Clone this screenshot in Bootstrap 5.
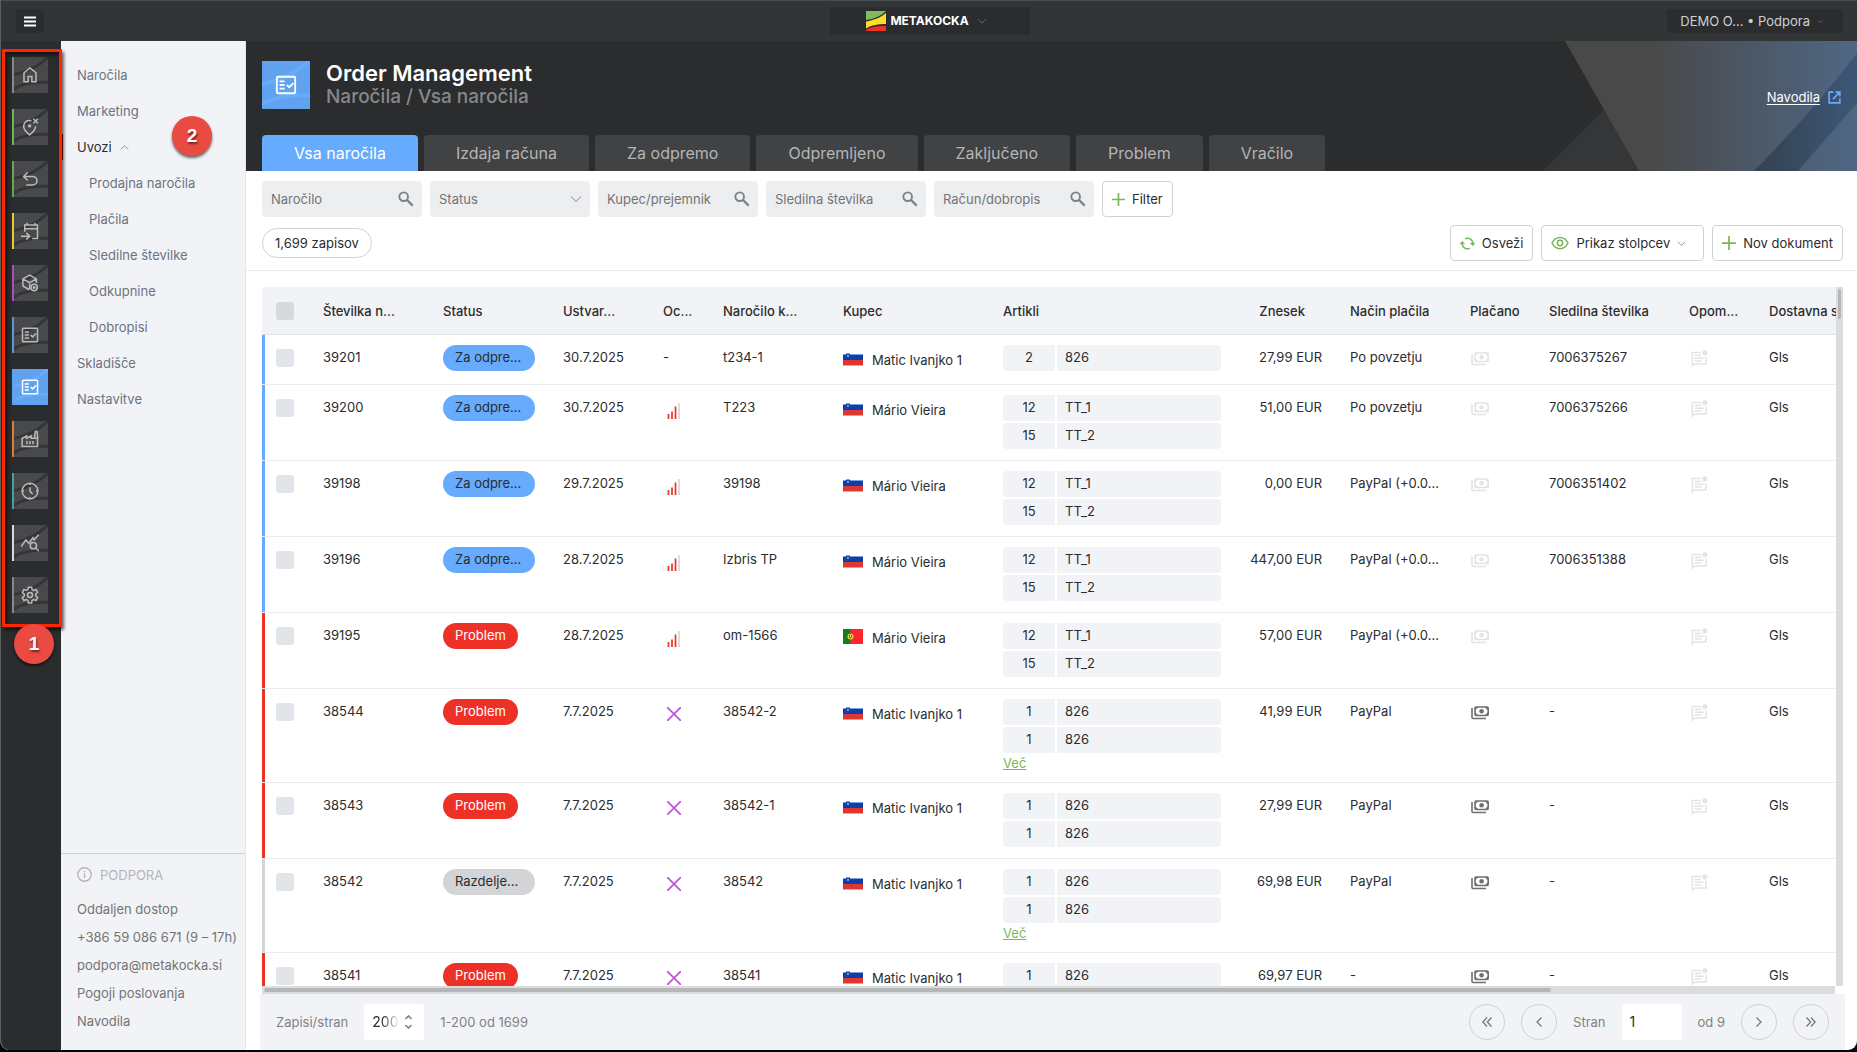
<!DOCTYPE html>
<html lang="sl">
<head>
<meta charset="utf-8">
<meta name="viewport" content="width=device-width, initial-scale=1">
<title>Metakocka – Order Management</title>
<link href="https://cdn.jsdelivr.net/npm/bootstrap@5.3.0/dist/css/bootstrap.min.css" rel="stylesheet">
<style>
:root{--dark:#2b2c2e;--soft:#f2f3f6;--blue:#66abfd;--red:#ee3126;--green:#77b95a;--ink:#2b2c2e;--slate:#6b7380}
body{font-family:Inter,"Liberation Sans",sans-serif;font-size:13px;line-height:20px;color:var(--ink);background:#02050f}
.app{height:calc(100vh - 2px);overflow:hidden;background:#fff;border-radius:0 0 9px 9px;border-left:1px solid #5c5f60}
svg{flex:none;display:block}
.ico{fill:none;stroke:currentColor;stroke-width:2}
.topbar{height:41px;background:#313536;border-top:1px solid #484d58;padding:0 14px 0 15px}
.top-side{flex:1 1 0}
.tb-btn{height:24px;background:var(--dark);color:#cfd0d1;border:0;border-radius:4px;font-size:13px;line-height:20px;padding:0 20px 0 13px}
.tb-menu{width:28px;padding:0;color:#fff}
.tb-brand{width:200px;height:28px;border-radius:0;color:#fff;font-weight:700;font-size:12px;padding:0 6px 0 0}
.rail{width:60px;background:var(--dark);padding:16px 0 0 11px;gap:16px}
.rail-tile{width:36px;height:36px;border-left:2px solid var(--c,#888);background:#48494b;color:#b9babb;padding-left:7px;position:relative;overflow:hidden}
.rail-tile .wave{position:absolute;left:0;top:0}
.rail-tile .ico{position:relative}
.wave{fill:none;stroke:#333436;stroke-width:3}
.rail-tile.now{background:#61a2ef;border-color:#61a2ef;color:#fff}
.now .wave,.headtile .wave{stroke:#66abfd}
.side{width:185px;background:var(--soft);border-right:1px solid #e6e7ea}
.side a{color:var(--slate);text-decoration:none;line-height:36px;display:block;padding-left:16px}
.side .sub a{padding-left:28px}
.side a.open{color:var(--ink)}
.side .support a{line-height:28px;color:#727476}
.support{border-top:1px solid #cfd0d3;padding-bottom:15px}
.support-title{color:#b3b4b7;padding:0 16px;height:41px;gap:8px}
.hero{height:130px;background:var(--dark);padding:20px 16px 0;position:relative}
.hero-art{position:absolute;right:0;top:0}
.headtile{width:48px;height:48px;background:#61a2ef;color:#fff;position:relative}
.headtile .wave{position:absolute;left:0;top:0}
.headtile .ico{position:relative}
.hero h1{font-size:22px;line-height:24px;font-weight:600;color:#fff;margin:0}
.hero h2{font-size:19px;line-height:24px;font-weight:500;color:#87888a;margin:0}
.help-link{color:#fff;text-underline-offset:2px;position:relative}
.help-link:hover{color:#fff}
.tabs{gap:6px;margin-top:26px;position:relative}
.tabs .nav-link{height:36px;padding:0 32px;font-size:16px;line-height:36px;background:#414244;color:#b4b5b6;border-radius:4px 4px 0 0}
.tabs .nav-link.active{background:var(--blue);color:#fff}
.tools{padding:10px 14px 9px 16px;border-bottom:1px solid #ebecee}
.fbox{width:160px;height:36px;background:#edeef0;border-radius:4px;padding:0 8px 0 9px;color:#7a828e}
.fbox input,.fbox select{border:0;background:transparent;outline:0;min-width:0;flex:1 1 auto;padding:0;appearance:none;color:#727476;font-size:13px}
.fbox input::placeholder{color:#727476;opacity:1}
.obtn{height:36px;border:1px solid #d0d1d3;border-radius:4px;background:#fff;color:var(--ink);padding:0 9px;font-size:13px;gap:7px}
.obtn svg:first-child{color:var(--green)}
.count{height:30px;line-height:28px;border:1px solid #d0d1d3;border-radius:15px;padding:0 12px}
.gridarea{margin:16px 14px 0 16px;min-height:0}
.gridview{overflow:hidden;min-width:0}
.vbar{width:8px;background:#dbdddc;padding:2px}
.vbar div{height:30px;background:#b4b6b8;border-radius:2px}
.hbar{height:8px;background:#dbdddc;margin:0 22px 0 16px;padding:2px}
.hbar div{height:4px;background:#b4b6b8;border-radius:2px}
.orders{width:1918px;table-layout:fixed;border-collapse:separate;border-spacing:0}
.orders th{height:48px;background:var(--soft);border-bottom:1px solid #dfe4e8;font-weight:500;padding:0 14px;white-space:nowrap}
.orders td{vertical-align:top;padding:10px 14px 9px;line-height:24px;border-bottom:1px solid #ebecee;white-space:nowrap;height:50px}
.orders td:first-child{box-shadow:inset 3px 0 0 var(--c)}
.t-blue{--c:#66abfd;--t:#2b2c2e}.t-red{--c:#ee3126;--t:#fff}.t-grey{--c:#d3d4d6;--t:#2b2c2e}
.orders input{appearance:none;width:18px;height:18px;border-radius:3px;background:#e1e4e8;display:block;margin:4px 0 0}
.orders th input{background:#d5dadd;margin:0}
.pill{display:inline-block;height:26px;line-height:24px;border-radius:13px;padding:0 12px;background:var(--c);color:var(--t);vertical-align:top}
.pill-cut{width:92px}
.num{text-align:right}
.orders th.num{padding-right:31px}
.buyer{line-height:30px;gap:9px}
.item-row{gap:2px;margin-bottom:2px}
.item-row span{background:var(--soft);height:26px}
.item-row span:first-child{width:52px;text-align:center;border-radius:4px 0 0 4px}
.item-row span:last-child{flex:1;padding-left:8px;border-radius:0 4px 4px 0}
.more{color:var(--green);display:block;width:fit-content;line-height:16px;height:18px}
.st{margin:5px 0 0 1px;color:#e4e4e5}
.st-on{color:#6f7072}
.foot{height:56px;background:var(--soft);margin:0 12px 0 14px;padding:0 16px;gap:16px;color:#808284}
.pgbox{width:60px;height:36px;background:#fff;border-radius:3px;color:#7a828e}
.pgbox input{border:0;outline:0;background:transparent;width:100%;padding:0 8px;font-size:14px;color:var(--ink)}
.pgbox.perpage input{width:36px;padding-right:0;-webkit-mask-image:linear-gradient(90deg,#000 50%,transparent 98%);mask-image:linear-gradient(90deg,#000 50%,transparent 98%)}
.circ{width:36px;height:36px;border:1px solid #cfd0d2;border-radius:50%;background:transparent;color:#6f7378;padding:0}
.note-frame{position:absolute;left:2px;top:49px;width:60px;height:578px;border:3px solid #ff2600;box-shadow:2px 3px 3px rgba(0,0,0,.6),inset 2px 3px 4px rgba(0,0,0,.6);pointer-events:none}
.note-dot{position:absolute;width:40px;height:40px;border-radius:50%;background:#e94a42;color:#fff;font:700 19px/40px "Liberation Sans",sans-serif;text-align:center;box-shadow:0 2px 3px rgba(0,0,0,.6);text-shadow:1px 2px 2px rgba(0,0,0,.5)}
.note-one{left:14px;top:624px}.note-two{left:172px;top:116px}
.mark-bar{position:absolute;left:61px;top:134px;width:2px;height:26px;background:#8c1a12}
</style>
</head>
<body>
<svg width="0" height="0" class="position-absolute" aria-hidden="true">
<symbol id="wave" viewBox="0 0 36 36"><path d="M-2 18C14 15 26 9 36-1M-2 34C10 26 22 25 38 26"/></symbol>
<symbol id="check" viewBox="0 0 24 24"><rect x="2" y="3" width="20" height="18" rx="1"/><path d="M5 8h5.500M5 12h5.500M5 16h5.500M13 12l2.500 2.500 4.500-4.500"/></symbol>
<symbol id="lens" viewBox="0 0 24 24"><circle cx="8.500" cy="8.500" r="6.500" stroke-width="2.800"/><path d="M13.500 13.500l8.500 8.500" stroke-width="3.400"/></symbol>
<symbol id="down" viewBox="0 0 24 24"><path d="M2 7l10 10 10-10"/></symbol>
<symbol id="bars" viewBox="0 0 14 16"><g stroke-width="1.700" stroke="#ee3126"><path d="M1.500 11v5M5 8.500V16M8.500 3.500V16"/></g><path d="M12 0v16" stroke="#d5d5d5" stroke-width="1.600"/></symbol>
<symbol id="cross" viewBox="0 0 14 14"><path d="M0 0l14 14M14 0L0 14" stroke="#c052d8" stroke-width="1.700"/></symbol>
<symbol id="cash" viewBox="0 0 18 14"><rect x="4" y="1" width="13.200" height="8.500" rx="1" stroke-width="1.600"/><circle cx="10.600" cy="5.200" r="2.300" fill="currentColor" stroke="none"/><path d="M4 1h3.500L4 4.500zM17 1h-3.500L17 4.500zM4 9.500h3.500L4 6zM17 9.500h-3.500L17 6z" fill="currentColor" stroke="none"/><path d="M1 2v9.500a1 1 0 0 0 1 1h13" stroke-width="1.600"/></symbol>
<symbol id="msg" viewBox="0 0 18 18"><path d="M11 2.500H2.300V16l2-2H16V7" stroke-width="1.500"/><path d="M4.500 5.500H11M4.500 8.200h9M4.500 11h7" stroke-width="1.400"/><circle cx="14.800" cy="2.800" r="2.600" fill="currentColor" stroke="none"/></symbol>
<symbol id="si" viewBox="0 0 20 15"><path fill="#fff" d="M0 0h20v4H0z"/><path fill="#0b3fae" d="M0 3.500h20v6H0z"/><path fill="#df372f" d="M0 9h20v5.500H0z"/><path d="M3 2.500h4v2.800L5 7.300 3 5.300z" fill="#0b3fae"/><path d="M4 5.500l1-2 1 2z" fill="#fff"/></symbol>
<symbol id="pt" viewBox="0 0 20 15"><path fill="#ff2530" d="M0 0h20v15H0z"/><path fill="#187b1d" d="M0 0h7.500v15H0z"/><circle cx="7.500" cy="7.500" r="3" fill="#e8d43a"/><path d="M6 5.800h3v2.400L7.500 9.500 6 8.200z" fill="#e22"/><path d="M6.900 6.400h1.200v1.600H6.900z" fill="#fff"/></symbol>
</svg>

<div class="app d-flex flex-column">
<header class="topbar d-flex align-items-center flex-shrink-0">
 <div class="top-side"><button class="tb-btn tb-menu d-flex align-items-center justify-content-center" aria-label="Meni"><svg width="12" height="11" viewBox="0 0 12 11" class="ico"><path d="M0 1.500h12M0 5.500h12M0 9.500h12"/></svg></button></div>
 <button class="tb-btn tb-brand d-flex align-items-center justify-content-center"><svg width="20" height="20" viewBox="0 0 20 20"><path fill="#7fbb5c" d="M0 0h20c-5 5-12 8-20 9z"/><path fill="#fddc2b" d="M0 10.500C8 9 15 6.500 20 2v11c-8 0-14 1-20 4.500z"/><path fill="#ee3126" d="M20 15v5H0v-1c5-3.500 12-4.500 20-4z"/></svg><span class="ms-1">METAKOCKA</span><svg width="10" height="10" class="ico ms-2 text-secondary"><use href="#down"/></svg></button>
 <div class="top-side d-flex justify-content-end"><button class="tb-btn d-flex align-items-center">DEMO O... • Podpora<svg width="5" height="5" class="ico ms-2 text-secondary" style="stroke-width:4"><use href="#down"/></svg></button></div>
</header>

<div class="d-flex flex-grow-1" style="min-height:0">
<nav class="rail d-flex flex-column flex-shrink-0" aria-label="Moduli">
 <a href="#" class="rail-tile d-flex align-items-center" aria-label="Domov"><svg class="wave" width="34" height="36"><use href="#wave"/></svg><svg class="ico" width="18" height="18" viewBox="0 0 24 24"><path d="M4 21V9l8-6.500L20 9v12h-5.500v-7h-5v7z"/></svg></a>
 <a href="#" class="rail-tile d-flex align-items-center" aria-label="Lokacije" style="--c:#74b356"><svg class="wave" width="34" height="36"><use href="#wave"/></svg><svg class="ico" width="18" height="18" viewBox="0 0 24 24"><path d="M14 3.800C8 2 3.500 6 3.500 11c0 4 3 7.500 8 11.500 5-4 8-7.500 8-11.500M16.500 1l6 6M22.500 1l-6 6"/><circle cx="11.500" cy="10.500" r="2.200" fill="currentColor" stroke="none"/></svg></a>
 <a href="#" class="rail-tile d-flex align-items-center" aria-label="Vračila" style="--c:#6ba550"><svg class="wave" width="34" height="36"><use href="#wave"/></svg><svg class="ico" width="18" height="18" viewBox="0 0 24 24"><path d="M9 3L3.500 8.500 9 14M4 8.500h11.500a5.500 5.500 0 0 1 0 11.500H7"/></svg></a>
 <a href="#" class="rail-tile d-flex align-items-center" aria-label="Koledar" style="--c:#e9cb2c"><svg class="wave" width="34" height="36"><use href="#wave"/></svg><svg class="ico" width="18" height="18" viewBox="0 0 24 24"><path d="M5 13V4h17v18h-7M5 9h17M8 4V1M18.500 4V1M0 19h11M7 14.500l4.500 4.500L7 23.500"/></svg></a>
 <a href="#" class="rail-tile d-flex align-items-center" aria-label="Skladišče" style="--c:#ab4dc2"><svg class="wave" width="34" height="36"><use href="#wave"/></svg><svg class="ico" width="18" height="18" viewBox="0 0 24 24"><path d="M11 21l-8.500-5V6.500L11.500 1.500l9 5V12M2.500 6.500l9 5 9-5M11.500 11.500V21"/><circle cx="17.500" cy="18" r="4.200"/><path d="M17.500 16v4M15.500 18h4"/></svg></a>
 <a href="#" class="rail-tile d-flex align-items-center" aria-label="Dokumenti" style="--c:#5b98df"><svg class="wave" width="34" height="36"><use href="#wave"/></svg><svg class="ico" width="18" height="18"><use href="#check"/></svg></a>
 <a href="#" class="rail-tile now d-flex align-items-center" aria-label="Order Management"><svg class="wave" width="34" height="36"><use href="#wave"/></svg><svg class="ico" width="18" height="18"><use href="#check"/></svg></a>
 <a href="#" class="rail-tile d-flex align-items-center" aria-label="Proizvodnja" style="--c:#e07b35"><svg class="wave" width="34" height="36"><use href="#wave"/></svg><svg class="ico" width="18" height="18" viewBox="0 0 24 24"><path d="M1.500 22V11l6-3v3l6-3v3h8.500v11zM18 11l1-9h2.500l.8 9M8 14.500V19M12 14.500V19M16 14.500V19"/></svg></a>
 <a href="#" class="rail-tile d-flex align-items-center" aria-label="Čas" style="--c:#3ea3a3"><svg class="wave" width="34" height="36"><use href="#wave"/></svg><svg class="ico" width="18" height="18" viewBox="0 0 24 24"><circle cx="12" cy="12" r="10.500"/><path d="M12 7v5.500l3.500 3.500M12 2v2M12 20v2M2 12h2M20 12h2"/></svg></a>
 <a href="#" class="rail-tile d-flex align-items-center" aria-label="Analitika" style="--c:#d9dadb"><svg class="wave" width="34" height="36"><use href="#wave"/></svg><svg class="ico" width="18" height="18" viewBox="0 0 24 24"><path d="M0 17L6.500 8l4 4.500L16 5l1.500 3 6-7M20 19l4 4"/><circle cx="16.500" cy="15.500" r="4.200"/></svg></a>
 <a href="#" class="rail-tile d-flex align-items-center" aria-label="Nastavitve"><svg class="wave" width="34" height="36"><use href="#wave"/></svg><svg class="ico" width="18" height="18" viewBox="0 0 24 24"><path d="M9.800 1.500h4.400l.6 3.300 2 1.100 3.200-1.200 2.200 3.900-2.600 2.200v2.400l2.600 2.200-2.200 3.900-3.200-1.200-2 1.100-.6 3.300H9.800l-.6-3.300-2-1.100L4 19.300l-2.200-3.900 2.600-2.200v-2.400L1.800 8.600 4 4.700l3.200 1.200 2-1.100z"/><circle cx="12" cy="12" r="3.300"/></svg></a>
</nav>

<aside class="side d-flex flex-column justify-content-between flex-shrink-0">
 <nav class="pt-3">
  <a href="#">Naročila</a><a href="#">Marketing</a>
  <a href="#" class="open d-flex align-items-center">Uvozi<svg width="9" height="9" viewBox="0 0 24 24" class="ico text-secondary ms-2"><path d="M2 17L12 7l10 10"/></svg></a>
  <div class="sub"><a href="#">Prodajna naročila</a><a href="#">Plačila</a><a href="#">Sledilne številke</a><a href="#">Odkupnine</a><a href="#">Dobropisi</a></div>
  <a href="#">Skladišče</a><a href="#">Nastavitve</a>
 </nav>
 <div class="support">
  <div class="support-title d-flex align-items-center"><svg width="15" height="15" viewBox="0 0 15 15" class="ico" style="stroke-width:1.400"><circle cx="7.500" cy="7.500" r="6.700"/><path d="M7.500 6.500V11M7.500 4v1.300"/></svg>PODPORA</div>
  <a href="#">Oddaljen dostop</a><a href="#">+386 59 086 671 (9 – 17h)</a><a href="#">podpora@metakocka.si</a><a href="#">Pogoji poslovanja</a><a href="#">Navodila</a>
 </div>
</aside>

<main class="d-flex flex-column flex-grow-1" style="min-width:0">
<section class="hero flex-shrink-0">
 <svg class="hero-art" width="314" height="130" viewBox="0 0 314 130"><defs><linearGradient id="ga"><stop offset=".3" stop-color="#49494a"/><stop offset="1" stop-color="#4f6784"/></linearGradient><linearGradient id="gb"><stop offset="0" stop-color="#344150"/><stop offset="1" stop-color="#3d5778"/></linearGradient></defs><path fill="#353637" d="M0 130L61 68.500 96 130z"/><path fill="url(#ga)" d="M22 0h292v130H96z"/><path fill="url(#gb)" d="M211 130Q270 70 314 12v50l-59 68z"/></svg>
 <div class="d-flex align-items-center">
  <div class="headtile d-flex align-items-center justify-content-center"><svg class="wave" width="48" height="48"><use href="#wave"/></svg><svg class="ico" width="22" height="22"><use href="#check"/></svg></div>
  <div class="ms-3"><h1>Order Management</h1><h2>Naročila / Vsa naročila</h2></div>
  <a href="#" class="help-link ms-auto d-flex align-items-center mt-4">Navodila<svg width="13" height="13" viewBox="0 0 24 24" class="ico ms-2" style="color:#66abfd;stroke-width:3"><path d="M10 2H2v20h20v-8M14 2h8v8M22 2L9 15"/></svg></a>
 </div>
 <nav class="tabs nav"><a class="nav-link active" href="#">Vsa naročila</a><a class="nav-link" href="#">Izdaja računa</a><a class="nav-link" href="#">Za odpremo</a><a class="nav-link" href="#">Odpremljeno</a><a class="nav-link" href="#">Zaključeno</a><a class="nav-link" href="#">Problem</a><a class="nav-link" href="#">Vračilo</a></nav>
</section>

<section class="tools flex-shrink-0">
 <div class="d-flex gap-2">
  <label class="fbox d-flex align-items-center"><input type="text" placeholder="Naročilo" aria-label="Naročilo"><svg width="16" height="16" class="ico"><use href="#lens"/></svg></label>
  <label class="fbox d-flex align-items-center"><select aria-label="Status"><option>Status</option></select><svg width="12" height="12" class="ico"><use href="#down"/></svg></label>
  <label class="fbox d-flex align-items-center"><input type="text" placeholder="Kupec/prejemnik" aria-label="Kupec/prejemnik"><svg width="16" height="16" class="ico"><use href="#lens"/></svg></label>
  <label class="fbox d-flex align-items-center"><input type="text" placeholder="Sledilna številka" aria-label="Sledilna številka"><svg width="16" height="16" class="ico"><use href="#lens"/></svg></label>
  <label class="fbox d-flex align-items-center"><input type="text" placeholder="Račun/dobropis" aria-label="Račun/dobropis"><svg width="16" height="16" class="ico"><use href="#lens"/></svg></label>
  <button class="obtn d-flex align-items-center"><svg width="13" height="13" viewBox="0 0 24 24" class="ico" style="stroke-width:3"><path d="M12 0v24M0 12h24"/></svg>Filter</button>
 </div>
 <div class="d-flex align-items-center gap-2 mt-2">
  <span class="count me-auto">1,699 zapisov</span>
  <button class="obtn d-flex align-items-center"><svg width="15" height="15" viewBox="0 0 24 24" class="ico" style="stroke-width:2.400"><path d="M8 4.500A8.500 8.500 0 0 1 20.500 12v2M16 19.500A8.500 8.500 0 0 1 3.500 12v-2"/><path d="M16.500 11.500l4 4 3.500-4zM7.500 12.500l-4-4-3.500 4z" fill="currentColor" stroke-width="1"/></svg>Osveži</button>
  <button class="obtn d-flex align-items-center"><svg width="18" height="14" viewBox="0 0 18 14" class="ico" style="stroke-width:1.500"><path d="M1 7c3.500-7.500 12.500-7.500 16 0-3.500 7.500-12.500 7.500-16 0z"/><circle cx="9" cy="7" r="2.700"/></svg>Prikaz stolpcev<svg width="9" height="9" class="ico text-secondary me-2"><use href="#down"/></svg></button>
  <button class="obtn d-flex align-items-center"><svg width="14" height="14" viewBox="0 0 24 24" class="ico" style="stroke-width:3"><path d="M12 0v24M0 12h24"/></svg>Nov dokument</button>
 </div>
</section>

<div class="gridarea d-flex flex-grow-1">
<div class="gridview flex-grow-1">
<table class="orders">
<colgroup><col style="width:47px"><col style="width:120px"><col style="width:120px"><col style="width:100px"><col style="width:60px"><col style="width:120px"><col style="width:160px"><col style="width:246px"><col style="width:101px"><col style="width:120px"><col style="width:79px"><col style="width:140px"><col style="width:80px"><col></colgroup>
<thead><tr><th><input type="checkbox" aria-label="Izberi vse"></th><th>Številka n...</th><th>Status</th><th>Ustvar...</th><th>Oc...</th><th>Naročilo k...</th><th>Kupec</th><th>Artikli</th><th class="num">Znesek</th><th>Način plačila</th><th>Plačano</th><th>Sledilna številka</th><th>Opom...</th><th>Dostavna služba</th></tr></thead>
<tbody>
<tr class="t-blue"><td><input type="checkbox" aria-label="39201"></td><td>39201</td><td><span class="pill pill-cut">Za odpre...</span></td><td>30.7.2025</td><td>-</td><td>t234-1</td><td><div class="buyer d-flex align-items-center"><svg width="20" height="15" class="mb-1"><use href="#si"/></svg>Matic Ivanjko 1</div></td><td><div class="item-row d-flex"><span>2</span><span>826</span></div></td><td class="num">27,99 EUR</td><td>Po povzetju</td><td><svg width="18" height="18" class="ico st"><use href="#cash"/></svg></td><td>7006375267</td><td><svg width="18" height="18" class="ico st"><use href="#msg"/></svg></td><td>Gls</td></tr>
<tr class="t-blue"><td><input type="checkbox" aria-label="39200"></td><td>39200</td><td><span class="pill pill-cut">Za odpre...</span></td><td>30.7.2025</td><td><svg width="14" height="16" class="ms-1 mt-2"><use href="#bars"/></svg></td><td>T223</td><td><div class="buyer d-flex align-items-center"><svg width="20" height="15" class="mb-1"><use href="#si"/></svg>Mário Vieira</div></td><td><div class="item-row d-flex"><span>12</span><span>TT_1</span></div><div class="item-row d-flex"><span>15</span><span>TT_2</span></div></td><td class="num">51,00 EUR</td><td>Po povzetju</td><td><svg width="18" height="18" class="ico st"><use href="#cash"/></svg></td><td>7006375266</td><td><svg width="18" height="18" class="ico st"><use href="#msg"/></svg></td><td>Gls</td></tr>
<tr class="t-blue"><td><input type="checkbox" aria-label="39198"></td><td>39198</td><td><span class="pill pill-cut">Za odpre...</span></td><td>29.7.2025</td><td><svg width="14" height="16" class="ms-1 mt-2"><use href="#bars"/></svg></td><td>39198</td><td><div class="buyer d-flex align-items-center"><svg width="20" height="15" class="mb-1"><use href="#si"/></svg>Mário Vieira</div></td><td><div class="item-row d-flex"><span>12</span><span>TT_1</span></div><div class="item-row d-flex"><span>15</span><span>TT_2</span></div></td><td class="num">0,00 EUR</td><td>PayPal (+0.0...</td><td><svg width="18" height="18" class="ico st"><use href="#cash"/></svg></td><td>7006351402</td><td><svg width="18" height="18" class="ico st"><use href="#msg"/></svg></td><td>Gls</td></tr>
<tr class="t-blue"><td><input type="checkbox" aria-label="39196"></td><td>39196</td><td><span class="pill pill-cut">Za odpre...</span></td><td>28.7.2025</td><td><svg width="14" height="16" class="ms-1 mt-2"><use href="#bars"/></svg></td><td>Izbris TP</td><td><div class="buyer d-flex align-items-center"><svg width="20" height="15" class="mb-1"><use href="#si"/></svg>Mário Vieira</div></td><td><div class="item-row d-flex"><span>12</span><span>TT_1</span></div><div class="item-row d-flex"><span>15</span><span>TT_2</span></div></td><td class="num">447,00 EUR</td><td>PayPal (+0.0...</td><td><svg width="18" height="18" class="ico st"><use href="#cash"/></svg></td><td>7006351388</td><td><svg width="18" height="18" class="ico st"><use href="#msg"/></svg></td><td>Gls</td></tr>
<tr class="t-red"><td><input type="checkbox" aria-label="39195"></td><td>39195</td><td><span class="pill">Problem</span></td><td>28.7.2025</td><td><svg width="14" height="16" class="ms-1 mt-2"><use href="#bars"/></svg></td><td>om-1566</td><td><div class="buyer d-flex align-items-center"><svg width="20" height="15" class="mb-1"><use href="#pt"/></svg>Mário Vieira</div></td><td><div class="item-row d-flex"><span>12</span><span>TT_1</span></div><div class="item-row d-flex"><span>15</span><span>TT_2</span></div></td><td class="num">57,00 EUR</td><td>PayPal (+0.0...</td><td><svg width="18" height="18" class="ico st"><use href="#cash"/></svg></td><td></td><td><svg width="18" height="18" class="ico st"><use href="#msg"/></svg></td><td>Gls</td></tr>
<tr class="t-red"><td><input type="checkbox" aria-label="38544"></td><td>38544</td><td><span class="pill">Problem</span></td><td>7.7.2025</td><td><svg width="14" height="14" class="ms-1 mt-2"><use href="#cross"/></svg></td><td>38542-2</td><td><div class="buyer d-flex align-items-center"><svg width="20" height="15" class="mb-1"><use href="#si"/></svg>Matic Ivanjko 1</div></td><td><div class="item-row d-flex"><span>1</span><span>826</span></div><div class="item-row d-flex"><span>1</span><span>826</span></div><a href="#" class="more">Več</a></td><td class="num">41,99 EUR</td><td>PayPal</td><td><svg width="18" height="18" class="ico st st-on"><use href="#cash"/></svg></td><td>-</td><td><svg width="18" height="18" class="ico st"><use href="#msg"/></svg></td><td>Gls</td></tr>
<tr class="t-red"><td><input type="checkbox" aria-label="38543"></td><td>38543</td><td><span class="pill">Problem</span></td><td>7.7.2025</td><td><svg width="14" height="14" class="ms-1 mt-2"><use href="#cross"/></svg></td><td>38542-1</td><td><div class="buyer d-flex align-items-center"><svg width="20" height="15" class="mb-1"><use href="#si"/></svg>Matic Ivanjko 1</div></td><td><div class="item-row d-flex"><span>1</span><span>826</span></div><div class="item-row d-flex"><span>1</span><span>826</span></div></td><td class="num">27,99 EUR</td><td>PayPal</td><td><svg width="18" height="18" class="ico st st-on"><use href="#cash"/></svg></td><td>-</td><td><svg width="18" height="18" class="ico st"><use href="#msg"/></svg></td><td>Gls</td></tr>
<tr class="t-grey"><td><input type="checkbox" aria-label="38542"></td><td>38542</td><td><span class="pill pill-cut">Razdelje...</span></td><td>7.7.2025</td><td><svg width="14" height="14" class="ms-1 mt-2"><use href="#cross"/></svg></td><td>38542</td><td><div class="buyer d-flex align-items-center"><svg width="20" height="15" class="mb-1"><use href="#si"/></svg>Matic Ivanjko 1</div></td><td><div class="item-row d-flex"><span>1</span><span>826</span></div><div class="item-row d-flex"><span>1</span><span>826</span></div><a href="#" class="more">Več</a></td><td class="num">69,98 EUR</td><td>PayPal</td><td><svg width="18" height="18" class="ico st st-on"><use href="#cash"/></svg></td><td>-</td><td><svg width="18" height="18" class="ico st"><use href="#msg"/></svg></td><td>Gls</td></tr>
<tr class="t-red"><td><input type="checkbox" aria-label="38541"></td><td>38541</td><td><span class="pill">Problem</span></td><td>7.7.2025</td><td><svg width="14" height="14" class="ms-1 mt-2"><use href="#cross"/></svg></td><td>38541</td><td><div class="buyer d-flex align-items-center"><svg width="20" height="15" class="mb-1"><use href="#si"/></svg>Matic Ivanjko 1</div></td><td><div class="item-row d-flex"><span>1</span><span>826</span></div></td><td class="num">69,97 EUR</td><td>-</td><td><svg width="18" height="18" class="ico st st-on"><use href="#cash"/></svg></td><td>-</td><td><svg width="18" height="18" class="ico st"><use href="#msg"/></svg></td><td>Gls</td></tr>
</tbody>
</table>
</div>
<div class="vbar"><div></div></div>
</div>
<div class="hbar flex-shrink-0"><div style="width:82%"></div></div>

<footer class="foot d-flex align-items-center flex-shrink-0">
 <label for="per">Zapisi/stran</label>
 <div class="pgbox perpage d-flex align-items-center"><input id="per" type="text" value="200"><svg width="9" height="14" viewBox="0 0 9 14" class="ico ms-1"><path d="M1.500 4l3-3 3 3M1.500 10l3 3 3-3" stroke-width="1.600"/></svg></div>
 <span class="me-auto">1-200 od 1699</span>
 <button class="circ d-flex align-items-center justify-content-center" aria-label="Prva"><svg width="10" height="10" viewBox="0 0 10 10" class="ico" style="stroke-width:1.200"><path d="M5 .5L.8 5 5 9.500M9.500.5L5.300 5l4.200 4.500"/></svg></button>
 <button class="circ d-flex align-items-center justify-content-center" aria-label="Prejšnja"><svg width="10" height="10" viewBox="0 0 10 10" class="ico" style="stroke-width:1.200"><path d="M7.500.5L3 5l4.500 4.500"/></svg></button>
 <label for="pg">Stran</label>
 <div class="pgbox d-flex align-items-center"><input id="pg" type="text" value="1"></div>
 <span>od 9</span>
 <button class="circ d-flex align-items-center justify-content-center" aria-label="Naslednja"><svg width="10" height="10" viewBox="0 0 10 10" class="ico" style="stroke-width:1.200"><path d="M2.500.5L7 5 2.500 9.500"/></svg></button>
 <button class="circ d-flex align-items-center justify-content-center" aria-label="Zadnja"><svg width="10" height="10" viewBox="0 0 10 10" class="ico" style="stroke-width:1.200"><path d="M5 .5L9.200 5 5 9.500M.5.5L4.700 5 .5 9.500"/></svg></button>
</footer>
</main>
</div>
</div>

<div class="mark-bar"></div>
<div class="note-frame"></div>
<div class="note-dot note-one">1</div>
<div class="note-dot note-two">2</div>
<script src="https://cdn.jsdelivr.net/npm/bootstrap@5.3.0/dist/js/bootstrap.bundle.min.js"></script>
</body>
</html>
